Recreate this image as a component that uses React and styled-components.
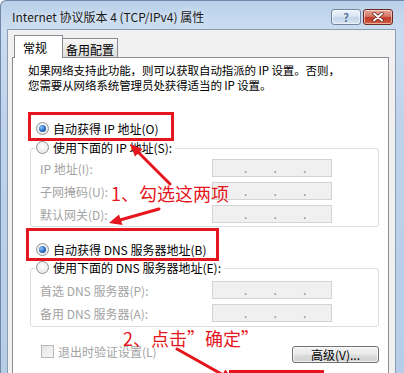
import React from 'react';
import styled, { createGlobalStyle } from 'styled-components';

const font = `"Noto Sans CJK SC", "Noto Sans", sans-serif`;
const markRed = '#e5161d';
const tabBorder = '#898c95';
const groupBorder = '#d5dfe5';

const GlobalStyle = createGlobalStyle`
  html, body { margin: 0; padding: 0; background: #fff; }
  body { font-family: ${font}; font-size: 12px; color: #000; }
`;

const Window = styled.div`
  position: relative;
  width: 404px;
  height: 373px;
  box-sizing: border-box;
  overflow: hidden;
  display: flex;
  flex-direction: column;
  padding: 0 8px 0 6px;
  border-top: 1px solid #6f88a8;
  border-left: 1px solid #6f88a8;
  border-radius: 6px 0 0 0;
  background: linear-gradient(180deg, #b9d0ea 0px, #cadcf0 28px, #bed3eb 120px, #b6cde8 100%);
`;

const TitleBar = styled.div`
  height: 28px;
  display: flex;
  align-items: flex-start;
  justify-content: space-between;
  padding-left: 5px;
`;

const Title = styled.div`
  margin-top: 8px;
  font-size: 12px;
  line-height: 16px;
  color: #1a1a1a;
  text-shadow: 0 0 6px rgba(255, 255, 255, 0.9);
`;

const Controls = styled.div`
  display: flex;
  gap: 2px;
  margin: 8px 3px 0 0;
`;

const CaptionButton = styled.div`
  width: ${p => p.$w}px;
  height: 16px;
  box-sizing: border-box;
  border: 1px solid ${p => (p.$close ? '#6d2a24' : '#7286a0')};
  border-radius: 3px;
  display: flex;
  align-items: center;
  justify-content: center;
  font-size: 11px;
  font-weight: bold;
  color: #5d7496;
  background: ${p =>
    p.$close
      ? 'linear-gradient(180deg, #e9a99a 0%, #d47865 45%, #c0392b 55%, #d3603f 100%)'
      : 'linear-gradient(180deg, #eef4fb 0%, #d9e5f3 45%, #c4d5ea 55%, #d6e3f2 100%)'};
  box-shadow: inset 0 0 0 1px rgba(255, 255, 255, 0.5);
`;

const Client = styled.div`
  flex: 1;
  display: flex;
  flex-direction: column;
  background: #f0f0f0;
  border: 1px solid #8c9db3;
  border-bottom: none;
  padding: 5px 6px 0 4px;
`;

const TabStrip = styled.div`
  height: 22px;
  display: flex;
  align-items: flex-end;
  padding-left: 2px;
  position: relative;
  z-index: 1;
`;

const Tab = styled.div`
  box-sizing: border-box;
  display: flex;
  align-items: center;
  font-size: 12px;
  border: 1px solid ${tabBorder};
  border-bottom: none;
  ${p =>
    p.$active
      ? `
    width: 49px;
    height: 23px;
    margin-bottom: -1px;
    padding-left: 8px;
    background: #fff;
  `
      : `
    width: 55px;
    height: 19px;
    border-left: none;
    justify-content: center;
    padding-top: 2px;
    background: linear-gradient(180deg, #f6f6f6 0%, #e9e9e9 50%, #dedede 100%);
  `}
`;

const Panel = styled.div`
  flex: 1;
  background: #fff;
  border: 1px solid ${tabBorder};
  border-bottom: none;
  padding: 5px 9px 0 0;
  display: flex;
  flex-direction: column;
`;

const Intro = styled.div`
  margin-left: 15px;
  display: flex;
  flex-direction: column;
`;

const IntroLine = styled.span`
  height: 15px;
  font-size: 11.5px;
  line-height: 15px;
  letter-spacing: -0.1px;
  white-space: nowrap;
`;

const Option = styled.div`
  height: 20px;
  display: flex;
  align-items: center;
  gap: 4px;
  margin: ${p => p.$mt || 0}px 0 0 23px;
  font-size: 12px;
`;

const Radio = styled.span`
  width: 13px;
  height: 13px;
  box-sizing: border-box;
  border-radius: 50%;
  border: 1px solid #8d9298;
  background: radial-gradient(circle at 50% 40%, #ffffff 0%, #e2e2e2 100%);
  display: inline-flex;
  align-items: center;
  justify-content: center;
  flex-shrink: 0;

  &::after {
    content: '';
    width: 7px;
    height: 7px;
    border-radius: 50%;
    background: ${p =>
      p.$checked ? 'radial-gradient(circle at 35% 35%, #8cc6ff 0%, #2c6ac0 55%, #183f82 100%)' : 'transparent'};
  }
`;

const GroupBox = styled.div`
  margin: ${p => p.$mt}px 0 0 17px;
  border: 1px solid ${groupBorder};
  border-radius: 3px;
  padding: 0 0 ${p => p.$pb}px 9px;
  display: flex;
  flex-direction: column;
  gap: 5px;
`;

const Legend = styled.div`
  align-self: flex-start;
  height: 20px;
  display: flex;
  align-items: center;
  gap: 4px;
  margin: -12px 0 0 -5px;
  padding: 0 3px 0 1px;
  background: #fff;
  font-size: 12px;
`;

const FieldRow = styled.div`
  height: 18px;
  display: flex;
  align-items: center;
  margin-top: ${p => p.$mt || 0}px;
`;

const FieldLabel = styled.span`
  width: 172px;
  color: #a3a3a3;
  font-size: 12px;
`;

const IpField = styled.div`
  width: 120px;
  height: 18px;
  box-sizing: border-box;
  border: 1px solid #d3d3d3;
  background: #f0f0f0;
  display: flex;
  align-items: flex-end;
  justify-content: space-between;
  padding: 0 25px 2px 31px;
`;

const IpDot = styled.span`
  width: 3px;
  font-size: 12px;
  line-height: 12px;
  color: #8a8a8a;
`;

const BottomRow = styled.div`
  margin: 18px 0 0 28px;
  display: flex;
  align-items: flex-start;
  justify-content: space-between;
`;

const CheckLabel = styled.div`
  display: flex;
  align-items: center;
  gap: 4px;
  height: 13px;
  line-height: 13px;
  color: #a3a3a3;
  font-size: 12px;
`;

const CheckBox = styled.span`
  width: 13px;
  height: 13px;
  box-sizing: border-box;
  border: 1px solid #b8b8b8;
  background: linear-gradient(135deg, #e4e4e4 0%, #f8f8f8 100%);
`;

const PushButton = styled.div`
  width: 87px;
  height: 17px;
  margin-top: 1px;
  box-sizing: border-box;
  border: 1px solid #707070;
  border-radius: 3px;
  display: flex;
  align-items: center;
  justify-content: center;
  font-size: 12px;
  background: linear-gradient(180deg, #f2f2f2 0%, #ebebeb 45%, #dddddd 55%, #cfcfcf 100%);
  box-shadow: inset 0 0 0 1px rgba(255, 255, 255, 0.7);
`;

const MarkBox = styled.div`
  position: absolute;
  left: ${p => p.$x}px;
  top: ${p => p.$y}px;
  width: ${p => p.$w}px;
  height: ${p => p.$h}px;
  box-sizing: border-box;
  border: 3px solid ${markRed};
  pointer-events: none;
`;

const MarkText = styled.div`
  position: absolute;
  left: ${p => p.$x}px;
  top: ${p => p.$y}px;
  font-family: ${font};
  font-size: 18px;
  line-height: 18px;
  color: ${markRed};
  white-space: nowrap;
  pointer-events: none;
`;

const Arrows = styled.svg`
  position: absolute;
  left: 0;
  top: 0;
  pointer-events: none;
`;

const IpInput = () => (
  <IpField>
    <IpDot>.</IpDot>
    <IpDot>.</IpDot>
    <IpDot>.</IpDot>
  </IpField>
);

const Field = ({ label, mt }) => (
  <FieldRow $mt={mt}>
    <FieldLabel>{label}</FieldLabel>
    <IpInput />
  </FieldRow>
);

const CloseGlyph = () => (
  <svg width="12" height="10" viewBox="0 0 12 10">
    <path d="M2 1.5 L10 8.5 M10 1.5 L2 8.5" stroke="#5a1a14" strokeWidth="3.4" strokeLinecap="round" />
    <path d="M2 1.5 L10 8.5 M10 1.5 L2 8.5" stroke="#fff" strokeWidth="2" strokeLinecap="round" />
  </svg>
);

export default function App() {
  return (
    <>
      <GlobalStyle />
      <Window>
        <TitleBar>
          <Title>Internet 协议版本 4 (TCP/IPv4) 属性</Title>
          <Controls>
            <CaptionButton $w={30}>?</CaptionButton>
            <CaptionButton $w={30} $close>
              <CloseGlyph />
            </CaptionButton>
          </Controls>
        </TitleBar>
        <Client>
          <TabStrip>
            <Tab $active>常规</Tab>
            <Tab>备用配置</Tab>
          </TabStrip>
          <Panel>
            <Intro>
              <IntroLine>如果网络支持此功能，则可以获取自动指派的 IP 设置。否则，</IntroLine>
              <IntroLine>您需要从网络系统管理员处获得适当的 IP 设置。</IntroLine>
            </Intro>
            <Option $mt={25}>
              <Radio $checked />
              自动获得 IP 地址(O)
            </Option>
            <GroupBox $mt={10} $pb={3}>
              <Legend>
                <Radio />
                使用下面的 IP 地址(S):
              </Legend>
              <Field label="IP 地址(I):" mt={-3} />
              <Field label="子网掩码(U):" />
              <Field label="默认网关(D):" />
            </GroupBox>
            <Option $mt={12}>
              <Radio $checked />
              自动获得 DNS 服务器地址(B)
            </Option>
            <GroupBox $mt={9} $pb={4}>
              <Legend>
                <Radio />
                使用下面的 DNS 服务器地址(E):
              </Legend>
              <Field label="首选 DNS 服务器(P):" mt={-1} />
              <Field label="备用 DNS 服务器(A):" />
            </GroupBox>
            <BottomRow>
              <CheckLabel>
                <CheckBox />
                退出时验证设置(L)
              </CheckLabel>
              <PushButton>高级(V)...</PushButton>
            </BottomRow>
          </Panel>
        </Client>

        <MarkBox $x={27} $y={111} $w={146} $h={29} />
        <MarkBox $x={25} $y={227} $w={193} $h={33} />
        <MarkBox $x={228} $y={369} $w={95} $h={20} />
        <MarkText $x={110} $y={183}>1、勾选这两项</MarkText>
        <MarkText $x={122} $y={328}>2、点击”确定”</MarkText>
        <Arrows width="404" height="373" viewBox="0 0 404 373">
          <g stroke={markRed} strokeWidth="3" strokeLinecap="round">
            <line x1="169" y1="183" x2="137" y2="151" />
            <line x1="158" y1="208" x2="119" y2="219" />
            <line x1="176" y1="348" x2="224" y2="375" />
          </g>
          <g fill={markRed}>
            <polygon points="129,143 141.5,148 134,155.5" />
            <polygon points="108,222 121.5,224 118,213.5" />
            <polygon points="233,381 218,378.5 224.5,368.5" />
          </g>
        </Arrows>
      </Window>
    </>
  );
}
